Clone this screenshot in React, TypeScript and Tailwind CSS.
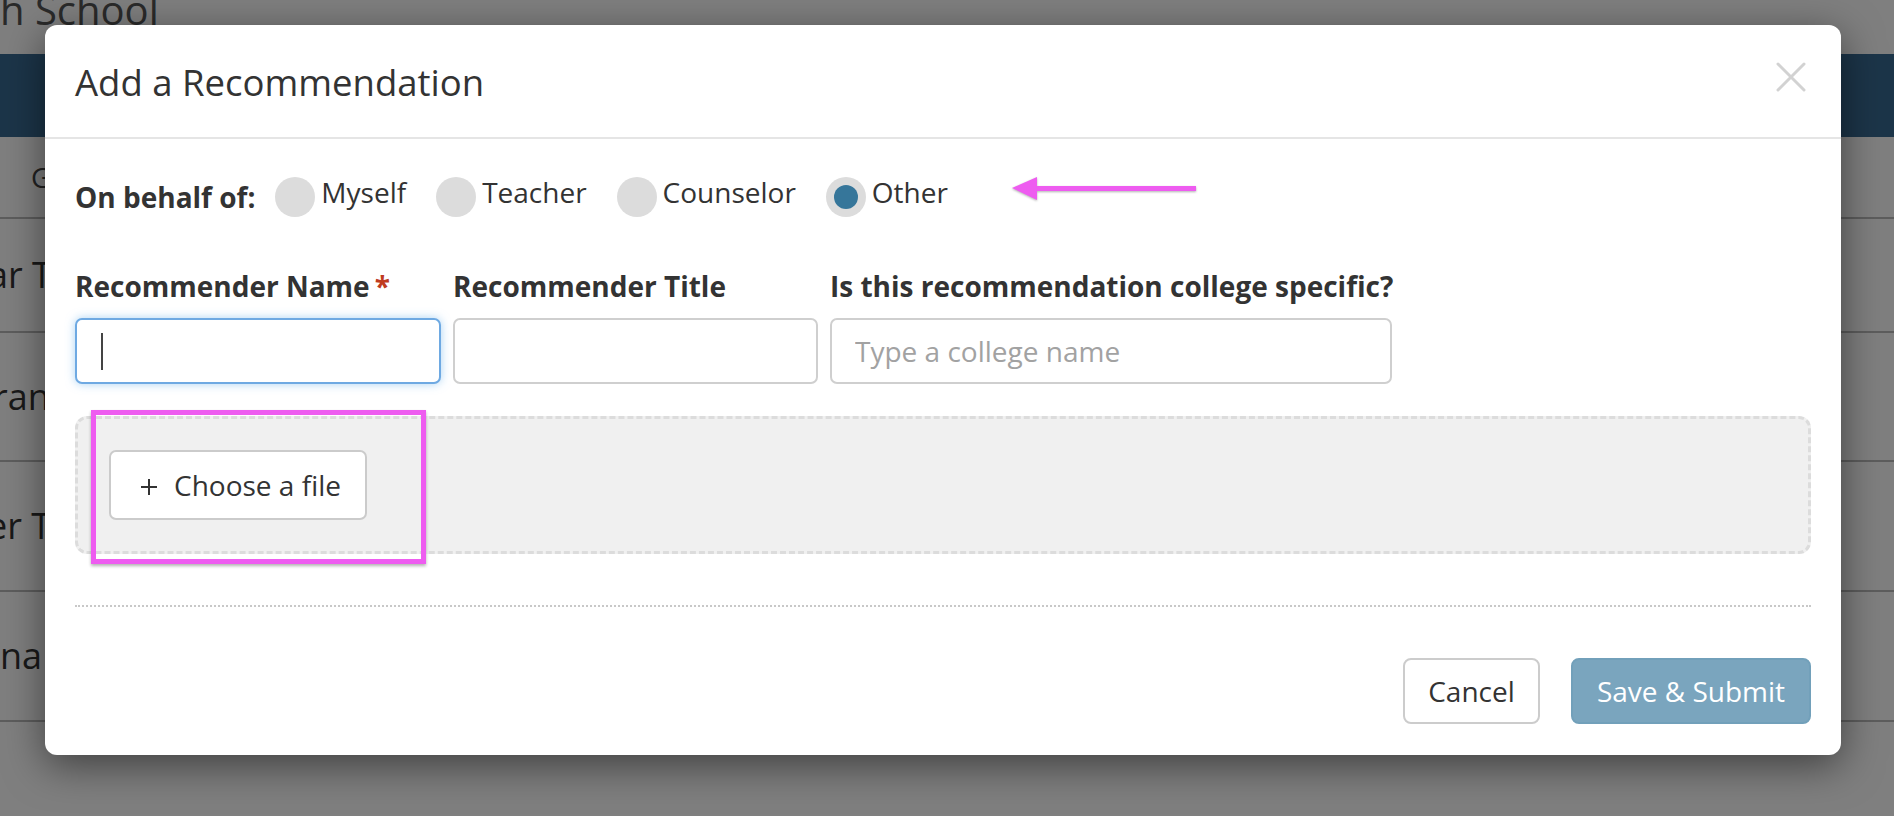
import React from 'react';

const OPTIONS = [
  { label: 'Myself', checked: false },
  { label: 'Teacher', checked: false },
  { label: 'Counselor', checked: false },
  { label: 'Other', checked: true },
];

const ROWS = [
  { text: 'ar Transcript', h: 'h-[114px]', shift: '-ml-[12px]' },
  { text: 'ranscript', h: 'h-[129px]', shift: '-ml-[7px]' },
  { text: 'er Transcript', h: 'h-[130px]', shift: '-ml-[13px]' },
  { text: 'na', h: 'h-[130px]', shift: 'ml-0' },
];

function Page() {
  return (
    <div className="flex flex-col">
      {/* school name header, cut at the top */}
      <div className="h-[54px] overflow-hidden">
        <p className="-mt-[10px] text-[40px] leading-none text-[#555] whitespace-nowrap">h School</p>
      </div>
      <div className="h-[83px] bg-[#386a92]" />
      <div className="h-[82px] flex items-center border-b-2 border-[#bbb] pl-[31px]">
        <span className="text-[28px] text-[#444]">Grades</span>
      </div>
      {ROWS.map(r => (
        <div key={r.text} className={`${r.h} flex items-center border-b-2 border-[#bbb] overflow-hidden`}>
          <span className={`${r.shift} text-[36px] whitespace-nowrap text-[#333]`}>{r.text}</span>
        </div>
      ))}
    </div>
  );
}

function Radio({ label, checked }: { label: string; checked: boolean }) {
  return (
    <label className="flex items-center">
      <span className="w-[40px] h-[40px] rounded-full bg-[#dcdcdc] flex items-center justify-center">
        {checked && <span className="w-[24px] h-[24px] rounded-full bg-[#36769a]" />}
      </span>
      <span className="ml-[6px] mb-[10px] text-[28px] leading-[38px] text-[#333]">{label}</span>
    </label>
  );
}

function Modal() {
  return (
    <div className="relative w-[1796px] rounded-[12px] bg-white shadow-[0_10px_40px_rgba(0,0,0,0.5)]">
      {/* Header */}
      <div className="h-[114px] flex items-center justify-between border-b-2 border-[#e5e5e5] pl-[30px] pr-[35px]">
        <h2 className="pt-[2px] text-[36.5px] leading-[49px] text-[#333]">Add a Recommendation</h2>
        <svg width="30" height="30" viewBox="0 0 30 30" className="mb-[8px]">
          <path d="M2 2 L28 28 M28 2 L2 28" stroke="#d2d2d2" strokeWidth="3" strokeLinecap="round" />
        </svg>
      </div>

      <div className="px-[30px] pt-[38px]">
        {/* On behalf of */}
        <div className="h-[40px] flex items-center">
          <span className="mr-[20px] text-[28px] leading-[38px] font-bold text-[#333]">On behalf of:</span>
          <div className="flex items-center gap-[30px]">
            {OPTIONS.map(o => <Radio key={o.label} {...o} />)}
          </div>
        </div>

        {/* Fields */}
        <div className="mt-[50px] flex gap-[12px]">
          <div className="w-[366px] flex flex-col">
            <span className="text-[28px] leading-[38px] font-bold text-[#333]">
              Recommender Name<span className="ml-[5px] text-[#bf3b1f]">*</span>
            </span>
            <div className="mt-[13px] h-[66px] rounded-[7px] border-2 border-[#6ea9e2] bg-white shadow-[0_0_10px_rgba(102,175,233,0.55)] flex items-center pl-[24px]">
              <span className="w-[2px] h-[37px] bg-[#444]" />
            </div>
          </div>
          <div className="w-[365px] flex flex-col">
            <span className="text-[28px] leading-[38px] font-bold text-[#333]">Recommender Title</span>
            <input className="mt-[13px] h-[66px] rounded-[7px] border-2 border-[#cfcfcf] px-[23px] text-[28px] outline-none" />
          </div>
          <div className="w-[562px] flex flex-col">
            <span className="text-[28px] leading-[38px] font-bold text-[#333] whitespace-nowrap">Is this recommendation college specific?</span>
            <input
              placeholder="Type a college name"
              className="mt-[13px] h-[66px] rounded-[7px] border-2 border-[#cfcfcf] px-[23px] text-[28px] text-[#333] placeholder:text-[#a2a2a2] outline-none"
            />
          </div>
        </div>

        {/* Drop zone */}
        <div className="mt-[32px] h-[138px] rounded-[12px] border-[3px] border-dashed border-[#dcdcdc] bg-[#f0f0f0] pt-[31px] pl-[31px]">
          <button className="h-[70px] flex items-center rounded-[7px] border-2 border-[#cbcbcb] bg-white pl-[30px] pr-[24px] text-[28px] text-[#333]">
            <svg width="16" height="16" viewBox="0 0 16 16" className="mr-[17px] mt-[3px]">
              <path d="M8 0 V16 M0 8 H16" stroke="#333" strokeWidth="2" />
            </svg>
            Choose a file
          </button>
        </div>

        <div className="mt-[51px] border-t-2 border-dotted border-[#c8c8c8]" />

        {/* Footer */}
        <div className="pt-[51px] pb-[31px] flex justify-end gap-[31px]">
          <button className="h-[66px] w-[137px] rounded-[8px] border-2 border-[#cccccc] bg-white text-[28px] text-[#333]">Cancel</button>
          <button className="h-[66px] w-[240px] rounded-[8px] border-2 border-[#72a0ba] bg-[#7aa5be] text-[28px] text-white">Save &amp; Submit</button>
        </div>
      </div>

      {/* annotation: highlight box */}
      <div className="absolute left-[46px] top-[385px] w-[335px] h-[154px] border-[5px] border-[#ee5cf0] shadow-[0_2px_3px_rgba(0,0,0,0.3)]" />

      {/* annotation: arrow */}
      <svg width="195" height="32" viewBox="0 0 195 32" className="absolute left-[960px] top-[147px] drop-shadow-[0_1px_1px_rgba(0,0,0,0.3)]">
        <polygon points="7,16 32,5 32,28" fill="#ee5cf0" />
        <rect x="30" y="14" width="161" height="5" fill="#ee5cf0" />
      </svg>
    </div>
  );
}

export default function App() {
  return (
    <div className="relative w-[1894px] h-[816px] overflow-hidden bg-white font-['Open_Sans','Noto_Sans',sans-serif] text-[#333]">
      <Page />
      <div className="absolute inset-0 bg-black/50 pl-[45px] pt-[25px]">
        <Modal />
      </div>
    </div>
  );
}
